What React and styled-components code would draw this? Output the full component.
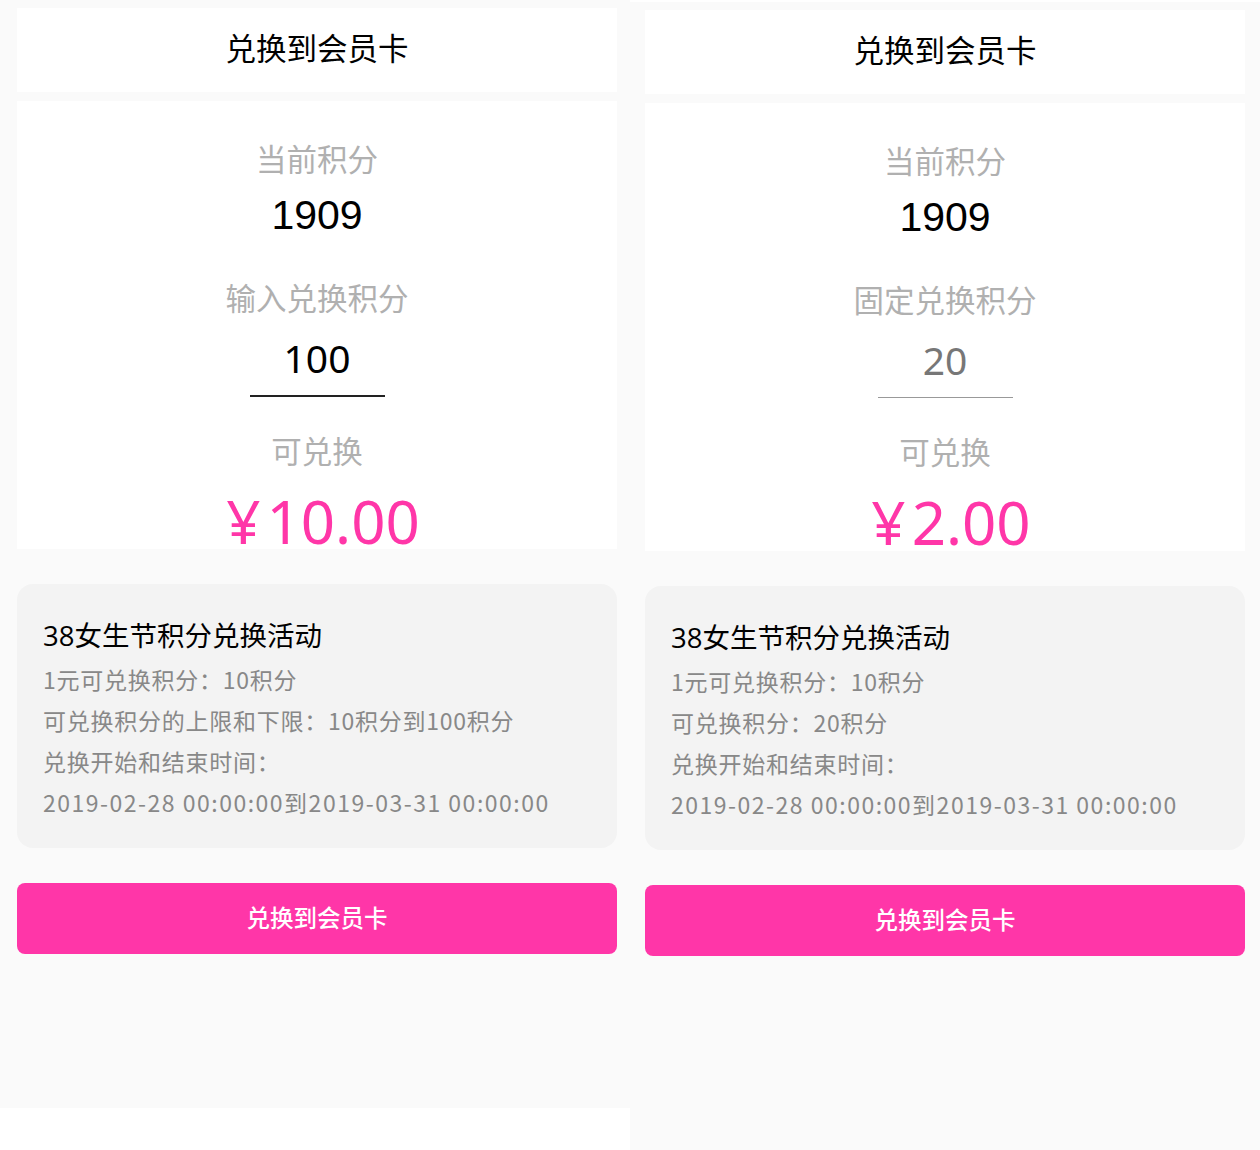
import React from 'react';
import styled, { createGlobalStyle } from 'styled-components';

const GlobalStyle = createGlobalStyle`
  body {
    margin: 0;
    background: #fff;
    font-family: "Noto Sans CJK SC", "Noto Sans", sans-serif;
  }
`;

const screens = [
  {
    shift: 0,
    height: 1108,
    padLeft: 17,
    inputLabel: '输入兑换积分',
    inputValue: '100',
    fixed: false,
    amount: '10.00',
    rules: [
      '1元可兑换积分：10积分',
      '可兑换积分的上限和下限：10积分到100积分',
      '兑换开始和结束时间：',
    ],
  },
  {
    shift: 2,
    height: 1148,
    padLeft: 15,
    inputLabel: '固定兑换积分',
    inputValue: '20',
    fixed: true,
    amount: '2.00',
    rules: [
      '1元可兑换积分：10积分',
      '可兑换积分：20积分',
      '兑换开始和结束时间：',
    ],
  },
];

const period = '2019-02-28 00:00:00到2019-03-31 00:00:00';

const Screen = ({ data }) => (
  <Phone $shift={data.shift} $height={data.height} $padLeft={data.padLeft}>
    <Header>兑换到会员卡</Header>
    <PointsCard>
      <Label $top={36}>当前积分</Label>
      <Balance>1909</Balance>
      <Label $top={37}>{data.inputLabel}</Label>
      <PointsInput $fixed={data.fixed}>{data.inputValue}</PointsInput>
      <Label $top={33}>可兑换</Label>
      <Amount>
        <Yen>¥</Yen>
        {data.amount}
      </Amount>
    </PointsCard>
    <RulesBox>
      <RulesTitle>38女生节积分兑换活动</RulesTitle>
      {data.rules.map((r) => (
        <RuleLine key={r}>{r}</RuleLine>
      ))}
      <RuleLine $wide>{period}</RuleLine>
    </RulesBox>
    <SubmitButton>兑换到会员卡</SubmitButton>
  </Phone>
);

const App = () => (
  <>
    <GlobalStyle />
    <Row>
      {screens.map((s, i) => (
        <Screen key={i} data={s} />
      ))}
    </Row>
  </>
);

// Styles
const Row = styled.div`
  display: flex;
  align-items: flex-start;
  width: 1260px;
`;

const Phone = styled.div`
  width: 630px;
  height: ${(p) => p.$height}px;
  margin-top: ${(p) => p.$shift}px;
  padding: 8px 0 0 ${(p) => p.$padLeft}px;
  box-sizing: border-box;
  background: #fafafa;
  display: flex;
  flex-direction: column;

  & > * {
    flex-shrink: 0;
  }
`;

const Header = styled.div`
  width: 600px;
  height: 84px;
  padding-bottom: 7px;
  box-sizing: border-box;
  background: #fff;
  display: flex;
  align-items: center;
  justify-content: center;
  font-size: 30.5px;
  color: #000;
`;

const PointsCard = styled.div`
  width: 600px;
  height: 448px;
  margin-top: 9px;
  background: #fff;
  overflow: hidden;
  display: flex;
  flex-direction: column;
  align-items: center;
  padding-top: 1px;
  box-sizing: border-box;

  & > * {
    flex-shrink: 0;
  }
`;

const Label = styled.div`
  margin-top: ${(p) => p.$top}px;
  font-size: 30.5px;
  line-height: 40px;
  color: #b0b0b0;
`;

const Balance = styled.div`
  margin-top: 12px;
  font-family: "Liberation Sans", Arial, sans-serif;
  font-size: 41px;
  line-height: 50px;
  color: #000;
`;

const PointsInput = styled.div`
  margin-top: 20px;
  width: 135px;
  height: 41px;
  padding-bottom: 17px;
  text-align: center;
  font-family: "Noto Sans", "Noto Sans CJK SC", sans-serif;
  font-size: 39px;
  line-height: 41px;
  color: ${(p) => (p.$fixed ? '#777' : '#000')};
  border-bottom: ${(p) => (p.$fixed ? '1.5px solid #999' : '2px solid #222')};
`;

const Amount = styled.div`
  margin-top: 16px;
  padding-left: 12px;
  font-family: "Noto Sans", "Noto Sans CJK SC", sans-serif;
  font-size: 60px;
  line-height: 70px;
  color: #ff36a8;
  display: flex;
  align-items: baseline;
`;

const Yen = styled.span`
  margin-right: 6px;
`;

const RulesBox = styled.div`
  width: 600px;
  height: 264px;
  margin-top: 35px;
  padding: 25px 26px 0;
  box-sizing: border-box;
  background: #f3f3f3;
  border-radius: 16px;
`;

const RulesTitle = styled.div`
  font-family: "Open Sans", "Noto Sans CJK SC", sans-serif;
  font-size: 27.5px;
  line-height: 54px;
  color: #000;
`;

const RuleLine = styled.div`
  font-family: "Noto Sans CJK SC", sans-serif;
  font-size: 23px;
  letter-spacing: ${(p) => (p.$wide ? '1.5px' : '0.75px')};
  line-height: 41px;
  margin-top: -4px;
  margin-bottom: 4px;
  color: #888;
  white-space: nowrap;
`;

const SubmitButton = styled.button`
  width: 600px;
  height: 71px;
  margin-top: 35px;
  padding: 0 0 4px;
  border: none;
  border-radius: 8px;
  background: #ff36a8;
  color: #fff;
  font-family: "Noto Sans CJK SC", sans-serif;
  font-size: 23.5px;
  font-weight: 500;
`;

export default App;
